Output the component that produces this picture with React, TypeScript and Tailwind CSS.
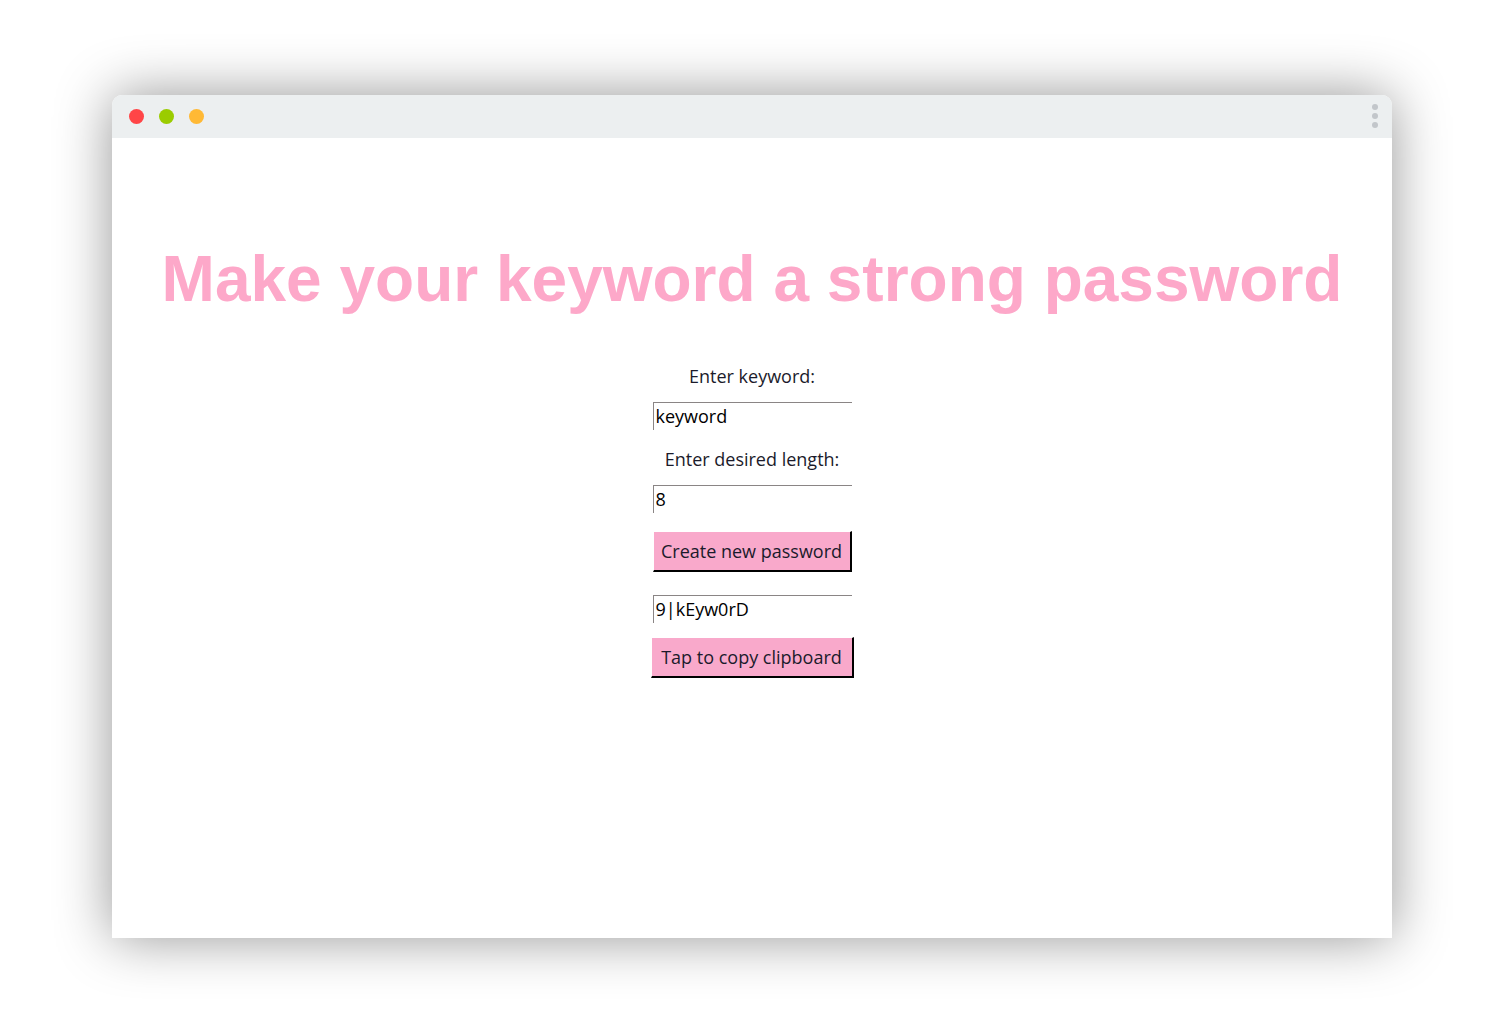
import React from "react";

const formFont = { fontFamily: '"Open Sans", "Noto Sans", sans-serif' };

function Field({ value }: { value: string }) {
  return (
    <div className="w-[199px] h-[28px] border-t border-l border-[#8a8585] bg-white pl-[2px] text-[18px] leading-[26px] text-black">
      {value}
    </div>
  );
}

function PinkButton({ label, width }: { label: string; width: string }) {
  return (
    <button
      className={`${width} h-[41px] bg-[#f9a9cb] border-t border-l border-white border-r-2 border-b-2 border-r-black border-b-black text-[18px] text-[#1b1b2b] leading-none whitespace-nowrap`}
    >
      {label}
    </button>
  );
}

export default function App() {
  return (
    <div className="w-[1504px] h-[1018px] bg-white pt-[95px] pl-[112px] overflow-hidden">
      <div className="w-[1280px] h-[843px] bg-white rounded-t-[10px] shadow-[0_0_55px_rgba(0,0,0,0.42)] flex flex-col">
        {/* Title bar */}
        <div className="h-[43px] bg-[#eceff0] rounded-t-[10px] flex items-center justify-between pl-[17px] pr-[14px]">
          <div className="flex items-center gap-[15px]">
            <span className="w-[15px] h-[15px] rounded-full bg-[#ff4547]" />
            <span className="w-[15px] h-[15px] rounded-full bg-[#9bcc00]" />
            <span className="w-[15px] h-[15px] rounded-full bg-[#ffb935]" />
          </div>
          <div className="flex flex-col gap-[3px] -mt-[1px]">
            <span className="w-[6px] h-[6px] rounded-full bg-[#c2c6ca]" />
            <span className="w-[6px] h-[6px] rounded-full bg-[#c2c6ca]" />
            <span className="w-[6px] h-[6px] rounded-full bg-[#c2c6ca]" />
          </div>
        </div>

        {/* Content */}
        <div className="flex flex-col items-center">
          <h1
            className="mt-[109px] text-[64px] leading-[64px] font-bold text-[#fda8c9] whitespace-nowrap"
            style={{ fontFamily: '"Liberation Sans", Arial, sans-serif' }}
          >
            Make your keyword a strong password
          </h1>

          <div className="flex flex-col items-center mt-[51px]" style={formFont}>
            <p className="h-[28px] leading-[28px] text-[18px] text-[#1b1b2b]">Enter keyword:</p>
            <div className="mt-[12px]">
              <Field value="keyword" />
            </div>
            <p className="mt-[15px] h-[28px] leading-[28px] text-[18px] text-[#1b1b2b]">Enter desired length:</p>
            <div className="mt-[12px]">
              <Field value="8" />
            </div>
            <div className="mt-[18px]">
              <PinkButton label="Create new password" width="w-[199px]" />
            </div>
            <div className="mt-[23px]">
              <Field value="9|kEyw0rD" />
            </div>
            <div className="mt-[14px]">
              <PinkButton label="Tap to copy clipboard" width="w-[203px]" />
            </div>
          </div>
        </div>
      </div>
    </div>
  );
}
